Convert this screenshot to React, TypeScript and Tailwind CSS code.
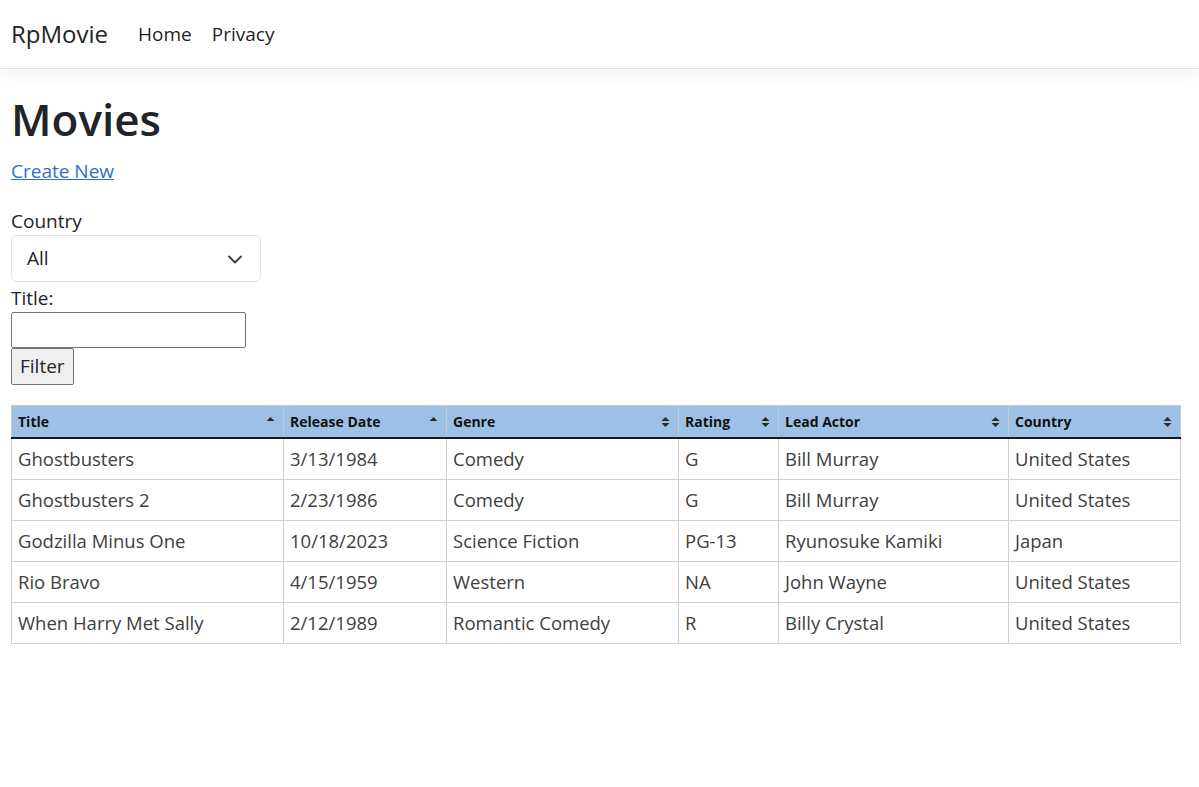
import React from "react";

const movies = [
  { title: "Ghostbusters", date: "3/13/1984", genre: "Comedy", rating: "G", actor: "Bill Murray", country: "United States" },
  { title: "Ghostbusters 2", date: "2/23/1986", genre: "Comedy", rating: "G", actor: "Bill Murray", country: "United States" },
  { title: "Godzilla Minus One", date: "10/18/2023", genre: "Science Fiction", rating: "PG-13", actor: "Ryunosuke Kamiki", country: "Japan" },
  { title: "Rio Bravo", date: "4/15/1959", genre: "Western", rating: "NA", actor: "John Wayne", country: "United States" },
  { title: "When Harry Met Sally", date: "2/12/1989", genre: "Romantic Comedy", rating: "R", actor: "Billy Crystal", country: "United States" },
];

const columns = [
  { label: "Title", width: "w-[272px]", sort: "asc" },
  { label: "Release Date", width: "w-[163px]", sort: "asc" },
  { label: "Genre", width: "w-[232px]", sort: "both" },
  { label: "Rating", width: "w-[100px]", sort: "both" },
  { label: "Lead Actor", width: "w-[230px]", sort: "both" },
  { label: "Country", width: "w-[172px]", sort: "both" },
];

const SortIcon = ({ sort }: { sort: string }) => (
  <svg width="9" height="12" viewBox="0 0 9 12" className="shrink-0">
    <path d="M0.5 5 L4.5 1 L8.5 5 Z" fill="#2b2b2b" />
    {sort === "both" && <path d="M0.5 7 L4.5 11 L8.5 7 Z" fill="#2b2b2b" />}
  </svg>
);

export default function App() {
  return (
    <div className="min-h-screen bg-white text-[#212529] font-['Open_Sans',sans-serif]">
      <nav className="h-[69px] border-b border-[#dee2e6] bg-white shadow-[0_5px_14px_rgba(0,0,0,0.05)] flex items-center px-[11px]">
        <span className="text-[24px] text-[#212529] mr-[30px]">RpMovie</span>
        <a className="text-[19px] text-[#000000e6] mr-[20px]">Home</a>
        <a className="text-[19px] text-[#000000e6]">Privacy</a>
      </nav>

      <main className="px-[11px] pb-8">
        <h1 className="text-[44px] font-semibold leading-[1.2] mt-[24px] mb-[14px]">Movies</h1>
        <a href="#" className="text-[19px] leading-[23px] text-[#2e6fcb] underline">Create New</a>

        <form className="mt-[26px] flex flex-col items-start text-[19px]">
          <label className="leading-[23px]">Country</label>
          <div className="relative w-[250px] h-[47px] mt-[2px] border border-[#dee2e6] rounded-[6px] flex items-center pl-[15px]">
            <span className="text-[19px]">All</span>
            <svg className="absolute right-[17px] top-[17px]" width="16" height="12" viewBox="0 0 16 12">
              <path d="M2 3.5 L8 9.5 L14 3.5" fill="none" stroke="#343a40" strokeWidth="1.8" strokeLinecap="round" strokeLinejoin="round" />
            </svg>
          </div>
          <label className="leading-[23px] mt-[5px]">Title:</label>
          <input className="w-[235px] h-[36px] mt-[2px] border border-[#767676] rounded-[2px] px-2 outline-none" />
          <button type="button" className="h-[37px] px-[8px] bg-[#efefef] border border-[#767676] rounded-[2px] text-[19px] leading-none">
            Filter
          </button>
        </form>

        <table className="mt-[20px] w-[1170px] table-fixed border-collapse">
          <thead>
            <tr className="bg-[#9dc1e6]">
              {columns.map((c) => (
                <th key={c.label} className={`${c.width} h-[33px] border border-[#c8c8c8] border-b-2 border-b-[#1a1a1a] px-[6px] text-left`}>
                  <div className="flex items-center justify-between text-[14px] font-bold text-[#111]">
                    <span>{c.label}</span>
                    <span className="mr-[2px]"><SortIcon sort={c.sort} /></span>
                  </div>
                </th>
              ))}
            </tr>
          </thead>
          <tbody>
            {movies.map((m) => (
              <tr key={m.title} className="h-[41px]">
                {[m.title, m.date, m.genre, m.rating, m.actor, m.country].map((v, i) => (
                  <td key={i} className="border border-[#d0d0d0] px-[6px] text-[18.5px] text-[#404040] whitespace-nowrap">
                    {v}
                  </td>
                ))}
              </tr>
            ))}
          </tbody>
        </table>
      </main>
    </div>
  );
}
